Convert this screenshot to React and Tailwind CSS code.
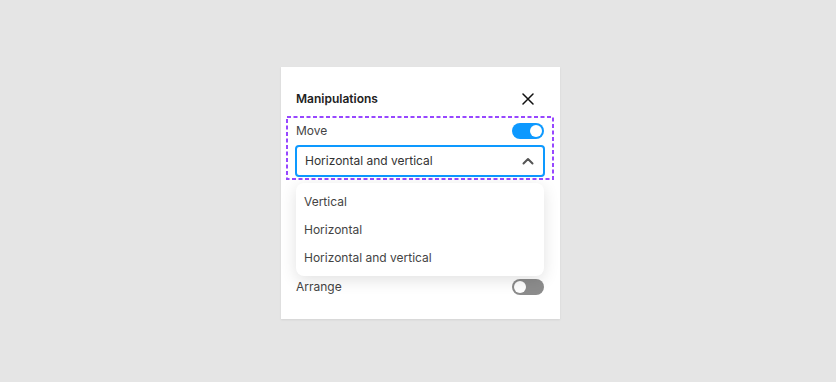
import { useState } from 'react'

const OPTIONS = ['Vertical', 'Horizontal', 'Horizontal and vertical']

function Toggle({ on }) {
  return (
    <div
      className={`w-8 h-4 rounded-full flex items-center px-[2px] ${
        on ? 'bg-[#0d99ff] justify-end' : 'bg-[#8c8c8c] justify-start'
      }`}
    >
      <div className="w-3 h-3 rounded-full bg-white" />
    </div>
  )
}

export default function App() {
  const [value] = useState('Horizontal and vertical')

  return (
    <div
      className="w-full h-[382px] bg-[#e5e5e5] flex justify-center items-center pl-[5px] pt-[4px]"
      style={{ fontFamily: 'Inter, "Noto Sans", sans-serif' }}
    >
      <div className="w-[279px] h-[252px] bg-white shadow-[0_1px_2px_rgba(0,0,0,0.08)] flex flex-col pt-[24px]">
        {/* Header */}
        <div className="flex items-center justify-between pl-[15px] pr-[26px] h-4">
          <span className="text-[12px] font-semibold text-[#222] leading-4">Manipulations</span>
          <svg width="12" height="12" viewBox="0 0 12 12" fill="none">
            <path d="M1 1L11 11M11 1L1 11" stroke="#111" strokeWidth="1.5" strokeLinecap="round" />
          </svg>
        </div>

        {/* Selected group */}
        <div className="relative mt-[9px] ml-[5px] w-[268px] h-[64px] p-[2px] pt-[7px]">
          {/* selection outline */}
          <svg className="absolute inset-0 pointer-events-none" width="268" height="64">
            <rect
              x="1"
              y="1"
              width="266"
              height="62"
              fill="none"
              stroke="#9747ff"
              strokeWidth="2"
              strokeDasharray="4 2.5"
            />
          </svg>
          <div className="flex items-center justify-between pl-[8px] pr-[8px] h-4">
            <span className="text-[12px] text-[#444] leading-4">Move</span>
            <Toggle on />
          </div>
          <div className="mt-[6px] ml-[7px] w-[250px] h-8 rounded-[4px] border-2 border-[#0d99ff] flex items-center justify-between pl-[8px] pr-[9px]">
            <span className="text-[12px] text-[#333] leading-4">{value}</span>
            <svg width="12" height="8" viewBox="0 0 12 8" fill="none">
              <path d="M1.5 6.5L6 2L10.5 6.5" stroke="#555" strokeWidth="2" strokeLinecap="round" strokeLinejoin="round" />
            </svg>
          </div>

          {/* Dropdown menu */}
          <div className="absolute left-[10px] top-[67px] w-[248px] h-[93px] bg-white rounded-[8px] shadow-[0_4px_16px_rgba(0,0,0,0.12)] pt-[5px] z-10 flex flex-col">
            {OPTIONS.map(o => (
              <div key={o} className="h-7 flex items-center px-2 text-[12px] text-[#444]">
                {o}
              </div>
            ))}
          </div>
        </div>

        {/* Other rows (covered by menu) */}
        <div className="flex items-center justify-between pl-[15px] pr-[16px] h-4 mt-[99px]">
          <span className="text-[12px] text-[#444] leading-4">Arrange</span>
          <Toggle />
        </div>
      </div>
    </div>
  )
}
